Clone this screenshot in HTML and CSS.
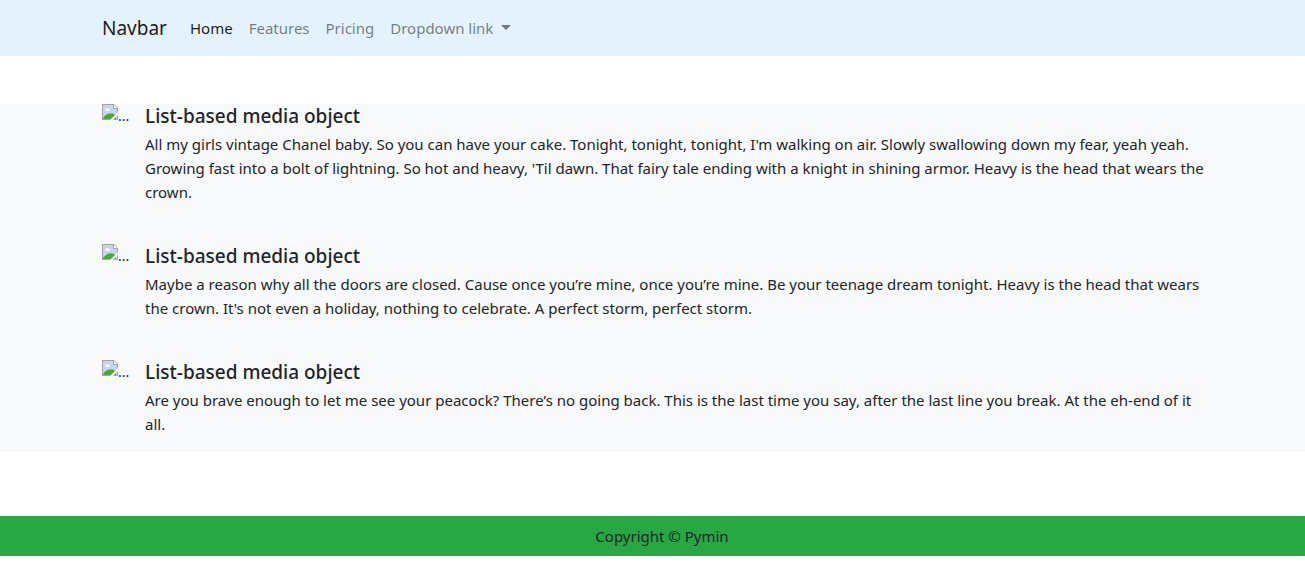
FILE: index.html
```html
<!DOCTYPE html>
<html lang="en">
<head>
<meta charset="utf-8">
<meta name="viewport" content="width=device-width, initial-scale=1">
<title>Pymin</title>
<link rel="stylesheet" href="styles.css">
</head>
<body>
<svg class="symbols" aria-hidden="true">
  <symbol id="picture" viewBox="0 0 16 16">
    <path d="M0 0H12L16 4V16H0Z" fill="#a5a5a5"/>
    <path d="M1 1H11V5H15V15H1Z" fill="#c3d5f5"/>
    <path d="M12 1L15 4H12Z" fill="#fff"/>
    <path d="M3 7V5.5H4C4 3.5 7 3.5 7 5.5H8V7Z" fill="#fff"/>
    <path d="M1 15V14C4 10 8 8 12 10L14 12V15Z" fill="#4ca834"/>
    <path d="M16 8L8 16H11L16 11Z" fill="#f8f9fa"/>
  </symbol>
</svg>
<nav class="navbar">
  <a class="brand" href="#">Navbar</a>
  <ul class="nav-list">
    <li><a class="nav-link active" href="#">Home</a></li>
    <li><a class="nav-link" href="#">Features</a></li>
    <li><a class="nav-link" href="#">Pricing</a></li>
    <li><a class="nav-link dropdown" href="#">Dropdown link</a></li>
  </ul>
</nav>
<main class="content">
  <ul class="media-list">
    <li class="media">
      <span class="thumb"><svg class="thumb-icon" aria-hidden="true"><use href="#picture"/></svg>...</span>
      <div class="media-body">
        <h5 class="media-title">List-based media object</h5>
        <p class="media-text">All my girls vintage Chanel baby. So you can have your cake. Tonight, tonight, tonight, I'm walking on air. Slowly swallowing down my fear, yeah yeah. Growing fast into a bolt of lightning. So hot and heavy, 'Til dawn. That fairy tale ending with a knight in shining armor. Heavy is the head that wears the crown.</p>
      </div>
    </li>
    <li class="media">
      <span class="thumb"><svg class="thumb-icon" aria-hidden="true"><use href="#picture"/></svg>...</span>
      <div class="media-body">
        <h5 class="media-title">List-based media object</h5>
        <p class="media-text">Maybe a reason why all the doors are closed. Cause once you’re mine, once you’re mine. Be your teenage dream tonight. Heavy is the head that wears the crown. It's not even a holiday, nothing to celebrate. A perfect storm, perfect storm.</p>
      </div>
    </li>
    <li class="media">
      <span class="thumb"><svg class="thumb-icon" aria-hidden="true"><use href="#picture"/></svg>...</span>
      <div class="media-body">
        <h5 class="media-title">List-based media object</h5>
        <p class="media-text">Are you brave enough to let me see your peacock? There’s no going back. This is the last time you say, after the last line you break. At the eh-end of it all.</p>
      </div>
    </li>
  </ul>
</main>
<footer class="footer">Copyright © Pymin</footer>
</body>
</html>
```

FILE: styles.css
```css
* { box-sizing: border-box; }
body {
  margin: 0;
  background: #fff;
  color: #212529;
  font: 15px/24px "Segoe UI", "Noto Sans", sans-serif;
}
.symbols { display: none; }
ul { list-style: none; margin: 0; padding: 0; }
a { text-decoration: none; }
.navbar {
  display: flex;
  align-items: center;
  height: 56px;
  padding: 0 93px 0 102px;
  background: #e3f2fd;
}
.brand {
  margin-right: 15px;
  color: rgba(0, 0, 0, .9);
  font-size: 19px;
}
.nav-list { display: flex; }
.nav-link {
  display: block;
  padding: 8px;
  color: rgba(0, 0, 0, .5);
}
.nav-link.active { color: rgba(0, 0, 0, .9); }
.dropdown::after {
  content: "";
  display: inline-block;
  margin-left: 8px;
  vertical-align: 4px;
  border-top: 5px solid;
  border-right: 5px solid transparent;
  border-left: 5px solid transparent;
}
.content {
  margin: 48px 0 64px;
  padding: 0 93px 16px 102px;
  background: #f8f9fa;
}
.media-list {
  display: flex;
  flex-direction: column;
  gap: 40px;
}
.media { display: flex; gap: 16px; }
.thumb { display: flex; width: 27px; flex: none; font-size: 14px; }
.thumb-icon { flex: none; width: 16px; height: 16px; }
.media-body { flex: 1; min-width: 0; }
.media-title {
  margin: 0 0 4px;
  font-size: 19px;
  font-weight: 500;
}
.media-text { margin: 0; }
.footer {
  padding: 8px 0 8px 19px;
  background: #28a745;
  text-align: center;
}
```
